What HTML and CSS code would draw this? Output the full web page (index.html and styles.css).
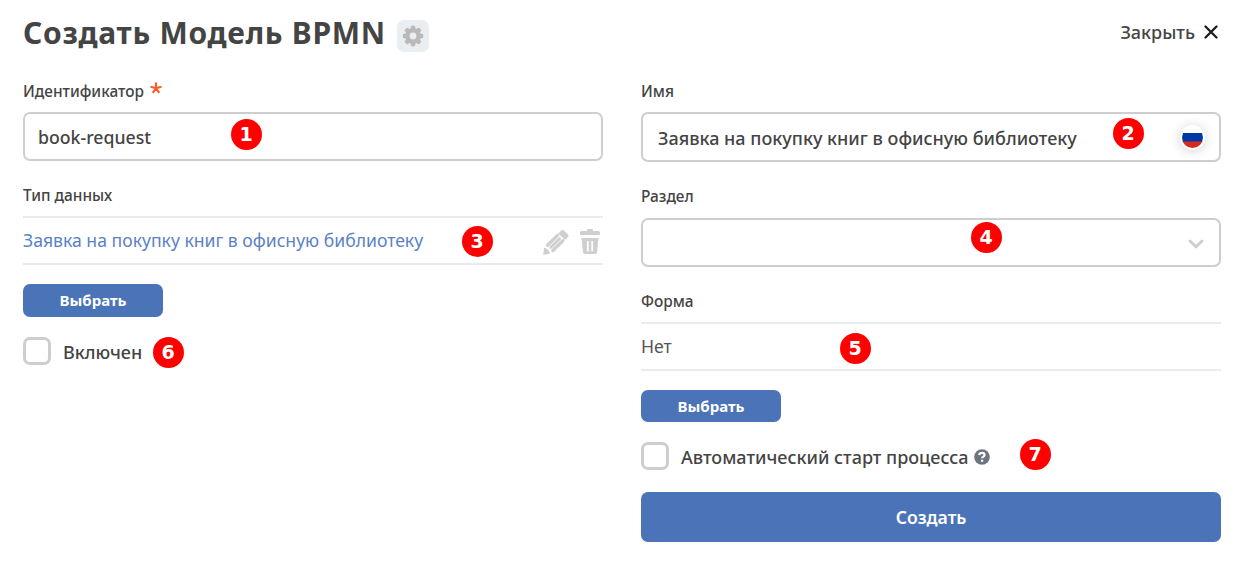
FILE: index.html
```html
<!DOCTYPE html>
<html lang="ru">
<head>
<meta charset="utf-8">
<title>Создать Модель BPMN</title>
<link rel="stylesheet" href="styles.css">
</head>
<body>
<main class="page">
  <header class="header">
    <h1 class="title">Создать Модель BPMN</h1>
    <button class="gear" aria-label="Настройки">
      <svg width="22" height="22" viewBox="0 0 22 22"><g fill="#b9b9b9"><circle cx="11" cy="11" r="8"/><rect x="8.8" y="0.8" width="4.4" height="20.4" rx="1.2"/><rect x="8.8" y="0.8" width="4.4" height="20.4" rx="1.2" transform="rotate(45 11 11)"/><rect x="8.8" y="0.8" width="4.4" height="20.4" rx="1.2" transform="rotate(90 11 11)"/><rect x="8.8" y="0.8" width="4.4" height="20.4" rx="1.2" transform="rotate(135 11 11)"/></g><circle cx="11" cy="11" r="3.4" fill="#e8eef1"/></svg>
    </button>
    <button class="close"><span>Закрыть</span>
      <svg width="14" height="14" viewBox="0 0 14 14"><path d="M1.5 1.5l11 11M12.5 1.5l-11 11" stroke="#1c1c1c" stroke-width="2.3" stroke-linecap="round"/></svg>
    </button>
  </header>

  <div class="columns">
    <section class="column">
      <div class="label label-first">Идентификатор<svg class="required" width="12" height="12" viewBox="0 0 12 12"><path d="M6 6.3V.6M6 6.3L.6 4.7M6 6.3l5.4-1.6M6 6.3l-3.3 4.6M6 6.3l3.3 4.6" stroke="#ff5a26" stroke-width="2.1"/></svg></div>
      <div class="input input-id">book-request</div>
      <div class="label label-type">Тип данных</div>
      <div class="entry">
        <a class="link">Заявка на покупку книг в офисную библиотеку</a>
        <span class="tools">
          <svg width="26" height="26" viewBox="0 0 26 26" fill="#cfcfcf" stroke="#cfcfcf" stroke-linejoin="round"><path stroke-width="1.4" d="M16.4 4.4l2.4-2.4q.8-.8 1.6 0l4 4q.8.8 0 1.6L22 10zM1 25l.7-5.6q3.2 1.4 4.6 4.6z"/><path d="M4.6 16.2L14.6 6.4M9.9 21.5L19.8 11.7" stroke-width="3.4" stroke-linecap="round"/><path d="M7.7 18.5L16.8 9.5" stroke-width="2.5" stroke-linecap="round"/></svg>
          <svg width="22" height="26" viewBox="0 0 22 26"><path d="M8 1.2q0-1.2 1-1.2h4q1 0 1 1.2V2h5.5q1.5 0 1.5 1.7V6H1V3.7Q1 2 2.5 2H8zM2.5 9h17L18 23.6q-.2 1.4-1.5 1.4h-11q-1.3 0-1.5-1.4z" fill="#cfcfcf"/><path d="M8.8 12v10.2M13.2 12v10.2" stroke="#fff" stroke-width="1.8"/></svg>
        </span>
      </div>
      <button class="button choose choose-type">Выбрать</button>
      <label class="check"><span class="box"></span><span class="caption">Включен</span></label>
    </section>

    <section class="column column-right">
      <div class="label label-first">Имя</div>
      <div class="input input-name"><span>Заявка на покупку книг в офисную библиотеку</span>
        <span class="flag"><svg width="21" height="21" viewBox="0 0 21 21"><clipPath id="disc"><circle cx="10.5" cy="10.5" r="10.5"/></clipPath><g clip-path="url(#disc)"><path fill="#fff" d="M0 0h21v7H0z"/><path fill="#0039a6" d="M0 6h21v9H0z"/><path fill="#d52b1e" d="M0 14.5h21V21H0z"/></g></svg></span>
      </div>
      <div class="label label-section">Раздел</div>
      <div class="input select"><svg width="16" height="10" viewBox="0 0 16 10" fill="none"><path d="M2 2l6 5.8L14 2" stroke="#cecece" stroke-width="2.8" stroke-linecap="round"/></svg></div>
      <div class="label label-form">Форма</div>
      <div class="entry"><span class="value">Нет</span></div>
      <button class="button choose choose-form">Выбрать</button>
      <label class="check check-auto"><span class="box"></span><span class="caption">Автоматический старт процесса</span><svg class="help" width="16" height="16" viewBox="0 0 16 16" fill="none"><circle cx="8" cy="8" r="7.8" fill="#6c757d"/><path d="M5.2 6.2C5.4 4.6 6.5 3.9 8 3.9c1.6 0 2.6.8 2.6 2 0 1.8-2.5 1.6-2.5 3.4" stroke="#fff" stroke-width="2.1"/><circle cx="8.1" cy="11.8" r="1.3" fill="#fff"/></svg></label>
      <button class="button submit">Создать</button>
    </section>
  </div>

  <span class="marker m1">1</span>
  <span class="marker m2">2</span>
  <span class="marker m3">3</span>
  <span class="marker m4">4</span>
  <span class="marker m5">5</span>
  <span class="marker m6">6</span>
  <span class="marker m7">7</span>
</main>
</body>
</html>
```

FILE: styles.css
```css
* { box-sizing: border-box; }
body { margin: 0; background: #fff; color: #444; font-family: "Noto Sans", "Open Sans", sans-serif; font-size: 18px; }
button { font: inherit; color: inherit; border: 0; padding: 0; background: none; }
svg { display: block; flex: none; }
.page { position: relative; height: 573px; padding: 0 23px; overflow: hidden; }
.header { display: flex; align-items: flex-start; height: 80px; }
.title { margin: 11px 0 0; font-size: 30px; line-height: 44px; font-weight: 700; letter-spacing: 0.7px; white-space: nowrap; }
.gear { display: flex; align-items: center; justify-content: center; width: 32px; height: 32px; margin: 20px 0 0 11px; border-radius: 7px; background: #e8eef1; }
.close { display: flex; align-items: center; gap: 9px; margin: 20px 3px 0 auto; line-height: 24px; font-weight: 500; }
.columns { display: grid; grid-template-columns: 580px 580px; gap: 38px; }
.column { display: flex; flex-direction: column; }
.label { display: flex; font-size: 15.4px; line-height: 22px; font-weight: 500; white-space: nowrap; }
.label-first { height: 32px; padding-top: 1px; }
.required { margin: 1px 0 0 6px; }
.input { display: flex; align-items: center; justify-content: space-between; height: 49px; border: 2px solid #cecece; border-radius: 7px; font-weight: 500; white-space: nowrap; }
.input-id { padding-left: 13px; font-size: 17.7px; }
.input-name { height: 50px; padding: 2px 14px 0 15px; }
.flag { display: flex; align-items: center; justify-content: center; width: 25px; height: 25px; margin-top: -2px; border-radius: 50%; background: #fff; box-shadow: 0 1px 12px rgba(0, 0, 0, 0.18); }
.label-type { margin-top: 24px; height: 31px; }
.label-section { margin-top: 24px; height: 32px; }
.select { justify-content: flex-end; padding: 3px 15px 0; }
.label-form { margin-top: 24px; height: 31px; }
.entry { display: flex; align-items: center; justify-content: space-between; height: 49px; border-top: 2px solid #e8ecef; border-bottom: 2px solid #e8ecef; font-size: 17.6px; font-weight: 400; white-space: nowrap; }
.link, .value { padding-bottom: 2px; }
.value { color: #555; }
.link { color: #5b82c3; }
.tools { display: flex; gap: 10px; padding: 3px 2px 0 0; }
.button { border-radius: 7px; background: #4b74b8; color: #fff; font-weight: 700; }
.choose { width: 140px; height: 33px; margin-top: 19px; font-size: 15px; }
.choose-type { padding-bottom: 2px; }
.choose-form { height: 32px; }
.check { display: flex; align-items: center; height: 28px; margin-top: 20px; font-weight: 500; white-space: nowrap; }
.caption { padding-top: 2px; }
.box { width: 28px; height: 28px; margin-right: 12px; border: 3px solid #cecece; border-radius: 7px; }
.help { margin: 2px 0 0 5px; }
.submit { height: 50px; margin-top: 22px; font-size: 17.6px; font-weight: 600; }
/* Numbered callouts pinned over the form */
.marker { position: absolute; width: 31px; height: 31px; border-radius: 50%; background: #f00; color: #fff; font: bold 19px/31px "DejaVu Sans", sans-serif; text-align: center; }
.m1 { left: 230.5px; top: 119px; }
.m2 { left: 1112.5px; top: 118px; }
.m3 { left: 461.5px; top: 226px; }
.m4 { left: 970.5px; top: 222px; }
.m5 { left: 839.5px; top: 333px; }
.m6 { left: 152.5px; top: 337px; }
.m7 { left: 1019.5px; top: 439px; }
```
